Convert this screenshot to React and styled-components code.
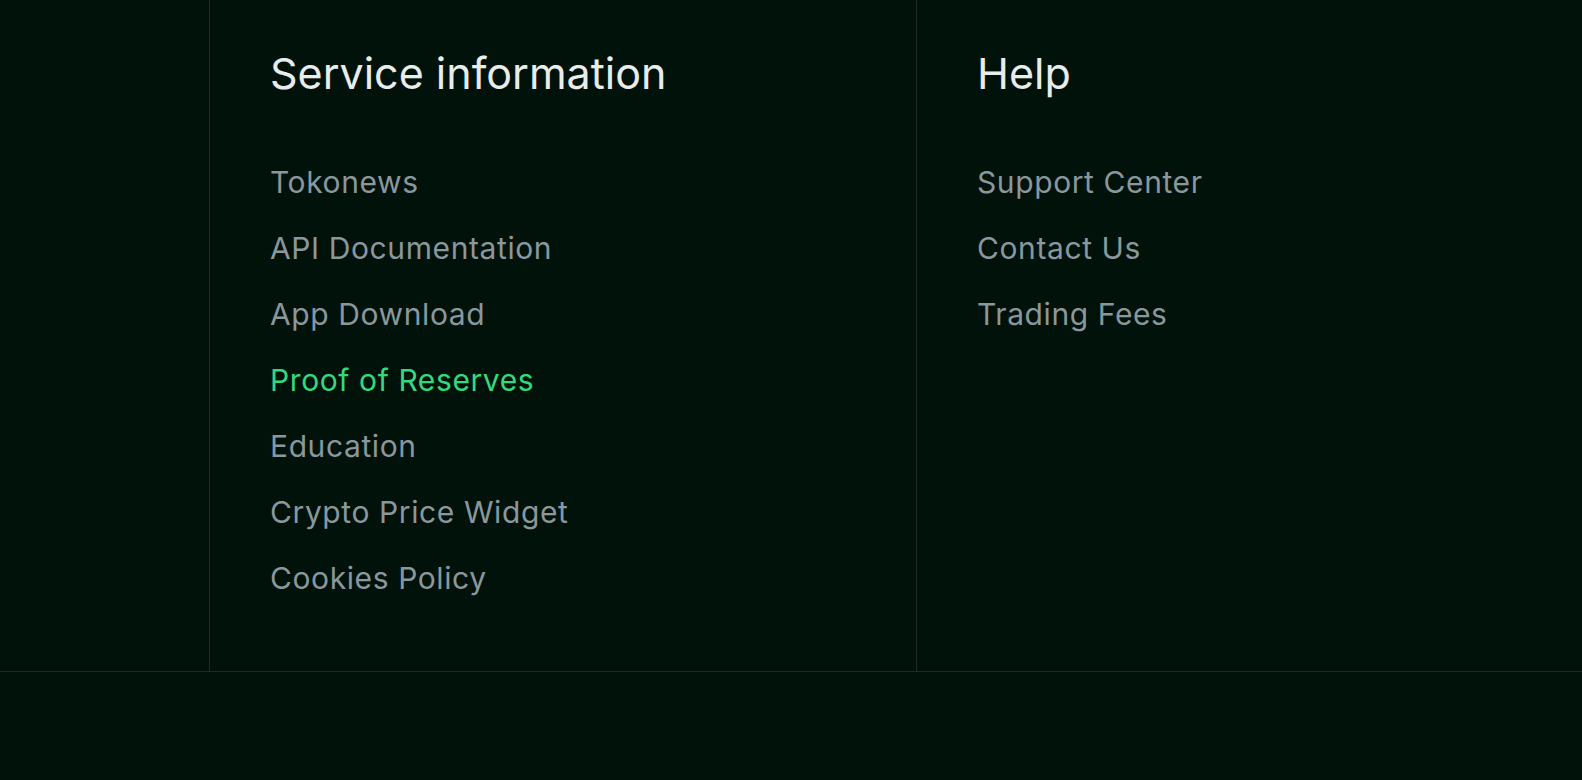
import React from "react";
import styled, { createGlobalStyle } from "styled-components";

const GlobalStyle = createGlobalStyle`
  html, body {
    margin: 0;
    padding: 0;
    background: #01120b;
  }
  body {
    font-family: Inter, "Liberation Sans", sans-serif;
    min-height: 780px;
  }
`;

const Footer = styled.footer`
  display: grid;
  grid-template-columns: 209px 707px 1fr;
  height: 672px;
  border-bottom: 1px solid #1f2c26;
  box-sizing: border-box;
`;

const Column = styled.div`
  border-left: ${(p) => (p.$first ? "none" : "1px solid #1f2c26")};
  padding: 47px 0 0 60px;
`;

const Heading = styled.h3`
  margin: 0 0 65px;
  font-size: 43px;
  line-height: 52px;
  font-weight: 400;
  color: #e8ecea;
  letter-spacing: 0;
`;

const LinkList = styled.ul`
  list-style: none;
  margin: 0;
  padding: 0;
  display: flex;
  flex-direction: column;
  gap: 30px;
`;

const Link = styled.li`
  font-size: 30px;
  line-height: 36px;
  color: ${(p) => (p.$active ? "#34d97d" : "#8a979c")};
  cursor: pointer;
  letter-spacing: 0.6px;

  &:hover {
    color: #34d97d;
  }
`;

const serviceLinks = [
  "Tokonews",
  "API Documentation",
  "App Download",
  "Proof of Reserves",
  "Education",
  "Crypto Price Widget",
  "Cookies Policy",
];

const helpLinks = ["Support Center", "Contact Us", "Trading Fees"];

const App = () => {
  return (
    <>
      <GlobalStyle />
      <Footer>
        <Column $first />
        <Column>
          <Heading>Service information</Heading>
          <LinkList>
            {serviceLinks.map((l) => (
              <Link key={l} $active={l === "Proof of Reserves"}>
                {l}
              </Link>
            ))}
          </LinkList>
        </Column>
        <Column>
          <Heading>Help</Heading>
          <LinkList>
            {helpLinks.map((l) => (
              <Link key={l}>{l}</Link>
            ))}
          </LinkList>
        </Column>
      </Footer>
    </>
  );
};

export default App;
